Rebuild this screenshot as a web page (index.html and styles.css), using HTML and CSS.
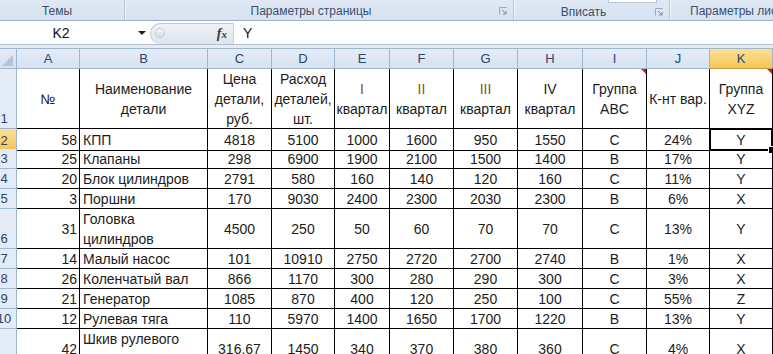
FILE: index.html
```html
<!DOCTYPE html>
<html lang="ru">
<head>
  <meta charset="UTF-8" />
  <title>Анализ ABC/XYZ</title>
  <link rel="stylesheet" href="styles.css">
</head>
<body>
  <div class="ribbon">
    <div class="group g-themes"><span class="group-label">Темы</span></div>
    <div class="group g-page">
      <span class="group-label">Параметры страницы</span>
      <span class="launcher"><svg width="8" height="8" viewBox="0 0 8 8"><path d="M0.5 7.5V0.5H7.5" fill="none" stroke="#9aa9bd"/><path d="M3 3L7 7M7 4V7H4" fill="none" stroke="#7b8ca4"/></svg></span>
    </div>
    <div class="group g-fit">
      <div class="spin-stub"></div>
      <div class="fit-row">
        <span class="group-label">Вписать</span>
        <span class="launcher"><svg width="8" height="8" viewBox="0 0 8 8"><path d="M0.5 7.5V0.5H7.5" fill="none" stroke="#9aa9bd"/><path d="M3 3L7 7M7 4V7H4" fill="none" stroke="#7b8ca4"/></svg></span>
      </div>
    </div>
    <div class="group g-sheet"><span class="group-label">Параметры листа</span></div>
  </div>

  <div class="formula-bar">
    <div class="name-box">
      <span class="name-value">K2</span>
      <span class="name-arrow"></span>
    </div>
    <div class="fx-box">
      <span class="knob"></span>
      <span class="fx">f<i>x</i></span>
    </div>
    <div class="formula-input">Y</div>
  </div>
  <div class="sheet-gap"></div>

  <div class="sheet">
    <div class="row head">
      <div class="corner"><svg width="11" height="11" viewBox="0 0 11 11"><polygon points="11,0 11,11 0,11" fill="#b8c4d3"/></svg></div>
      <div class="ch">A</div><div class="ch">B</div><div class="ch">C</div><div class="ch">D</div>
      <div class="ch">E</div><div class="ch">F</div><div class="ch">G</div><div class="ch">H</div>
      <div class="ch">I</div><div class="ch">J</div><div class="ch active">K</div>
    </div>

    <div class="row r1">
      <div class="rh">1</div>
      <div class="c"><span>№</span></div>
      <div class="c"><span>Наименование детали</span></div>
      <div class="c"><span>Цена детали, руб.</span></div>
      <div class="c"><span>Расход деталей, шт.</span></div>
      <div class="c"><span><span class="rim">I</span> квартал</span></div>
      <div class="c"><span><span class="rim">II</span> квартал</span></div>
      <div class="c"><span><span class="rim">III</span> квартал</span></div>
      <div class="c"><span>IV квартал</span></div>
      <div class="c note"><span>Группа ABC</span></div>
      <div class="c"><span>К-нт вар.</span></div>
      <div class="c note"><span>Группа XYZ</span></div>
    </div>

    <div class="row">
      <div class="rh active">2</div>
      <div class="c num">58</div><div class="c txt">КПП</div><div class="c">4818</div><div class="c">5100</div>
      <div class="c">1000</div><div class="c">1600</div><div class="c">950</div><div class="c">1550</div>
      <div class="c">C</div><div class="c">24%</div><div class="c sel">Y</div>
    </div>
    <div class="row">
      <div class="rh">3</div>
      <div class="c num">25</div><div class="c txt">Клапаны</div><div class="c">298</div><div class="c">6900</div>
      <div class="c">1900</div><div class="c">2100</div><div class="c">1500</div><div class="c">1400</div>
      <div class="c">B</div><div class="c">17%</div><div class="c">Y</div>
    </div>
    <div class="row">
      <div class="rh">4</div>
      <div class="c num">20</div><div class="c txt">Блок цилиндров</div><div class="c">2791</div><div class="c">580</div>
      <div class="c">160</div><div class="c">140</div><div class="c">120</div><div class="c">160</div>
      <div class="c">C</div><div class="c">11%</div><div class="c">Y</div>
    </div>
    <div class="row">
      <div class="rh">5</div>
      <div class="c num">3</div><div class="c txt">Поршни</div><div class="c">170</div><div class="c">9030</div>
      <div class="c">2400</div><div class="c">2300</div><div class="c">2030</div><div class="c">2300</div>
      <div class="c">B</div><div class="c">6%</div><div class="c">X</div>
    </div>
    <div class="row tall">
      <div class="rh">6</div>
      <div class="c num">31</div><div class="c txt">Головка цилиндров</div><div class="c">4500</div><div class="c">250</div>
      <div class="c">50</div><div class="c">60</div><div class="c">70</div><div class="c">70</div>
      <div class="c">C</div><div class="c">13%</div><div class="c">Y</div>
    </div>
    <div class="row">
      <div class="rh">7</div>
      <div class="c num">14</div><div class="c txt">Малый насос</div><div class="c">101</div><div class="c">10910</div>
      <div class="c">2750</div><div class="c">2720</div><div class="c">2700</div><div class="c">2740</div>
      <div class="c">B</div><div class="c">1%</div><div class="c">X</div>
    </div>
    <div class="row">
      <div class="rh">8</div>
      <div class="c num">26</div><div class="c txt">Коленчатый вал</div><div class="c">866</div><div class="c">1170</div>
      <div class="c">300</div><div class="c">280</div><div class="c">290</div><div class="c">300</div>
      <div class="c">C</div><div class="c">3%</div><div class="c">X</div>
    </div>
    <div class="row">
      <div class="rh">9</div>
      <div class="c num">21</div><div class="c txt">Генератор</div><div class="c">1085</div><div class="c">870</div>
      <div class="c">400</div><div class="c">120</div><div class="c">250</div><div class="c">100</div>
      <div class="c">C</div><div class="c">55%</div><div class="c">Z</div>
    </div>
    <div class="row">
      <div class="rh">10</div>
      <div class="c num">12</div><div class="c txt">Рулевая тяга</div><div class="c">110</div><div class="c">5970</div>
      <div class="c">1400</div><div class="c">1650</div><div class="c">1700</div><div class="c">1220</div>
      <div class="c">B</div><div class="c">13%</div><div class="c">Y</div>
    </div>
    <div class="row tall">
      <div class="rh">11</div>
      <div class="c num">42</div><div class="c txt">Шкив рулевого насоса</div><div class="c">316.67</div><div class="c">1450</div>
      <div class="c">340</div><div class="c">370</div><div class="c">380</div><div class="c">360</div>
      <div class="c">C</div><div class="c">4%</div><div class="c">X</div>
    </div>
  </div>
</body>
</html>
```

FILE: styles.css
```css
:root {
  --linha-fita: #b4c5dc;
  --linha-cabecalho: #9eb6ce;
  --texto-cabecalho: #2c4569;
  --celula: #1c1c1c;
  --cols: 25px 63px 128px 64px 63px 55px 64px 64px 65px 64px 63px 63px;
}
* {
  box-sizing: border-box;
}
body {
  margin: 0;
  overflow: hidden;
  background: #fff;
  font-family: 'Liberation Sans', Arial, sans-serif;
}

/* ribbon */
.ribbon {
  display: flex;
  height: 21px;
  background: linear-gradient(#dfe8f4, #d7e3f1);
  border-bottom: 1px solid #9cb0c9;
  font-size: 12px;
  color: #3b4f6e;
}
.group {
  display: flex;
  flex-shrink: 0;
  align-items: center;
  border-right: 1px solid var(--linha-fita);
  box-shadow: 1px 0 0 #eef3fa;
  padding-top: 2px;
}
.group-label {
  flex: 1;
  text-align: center;
}
.g-themes {
  width: 125px;
  padding-right: 10px;
}
.g-page {
  width: 389px;
}
.g-fit {
  width: 156px;
  flex-direction: column;
  align-items: stretch;
  padding-top: 0;
}
.spin-stub {
  height: 3px;
  width: 49px;
  margin-left: 94px;
  background: #fff;
  border: 1px solid #b9c6d6;
  border-top: none;
}
.fit-row {
  flex: 1;
  display: flex;
  align-items: center;
}
.g-sheet {
  flex: 1;
  flex-shrink: 1;
  min-width: 0;
  overflow: hidden;
  border-right: none;
  box-shadow: none;
  padding-left: 20px;
}
.g-sheet .group-label {
  text-align: left;
  white-space: nowrap;
}
.launcher {
  width: 16px;
  display: flex;
  padding-left: 2px;
}

/* formula bar */
.formula-bar {
  display: flex;
  height: 24px;
  background: #fff;
  border-bottom: 1px solid #b3c1d3;
  font-size: 14px;
  color: #111;
}
.name-box {
  width: 150px;
  display: flex;
  align-items: center;
}
.name-value {
  width: 122px;
  text-align: center;
}
.name-arrow {
  margin-left: 16px;
  border-left: 4px solid transparent;
  border-right: 4px solid transparent;
  border-top: 4px solid #222;
}
.fx-box {
  width: 84px;
  margin-top: 2px;
  display: flex;
  align-items: center;
  background: linear-gradient(#eef2f7, #dde4ee);
  border: 1px solid #bcc8d7;
  border-bottom: none;
  border-right: 1px solid #c8d2de;
  border-radius: 11px 0 0 11px;
}
.knob {
  width: 10px;
  height: 10px;
  margin-left: 4px;
  margin-top: -3px;
  border-radius: 50%;
  background: linear-gradient(#f6f8fb, #d3dbe6);
  border: 1px solid #bfcad8;
}
.fx {
  margin-left: auto;
  padding-right: 6px;
  font-family: 'Liberation Serif', serif;
  font-style: italic;
  font-weight: bold;
  font-size: 14px;
  color: #3a3a3a;
}
.fx i {
  font-size: 11px;
}
.formula-input {
  flex: 1;
  display: flex;
  align-items: center;
  padding-left: 9px;
}
.sheet-gap {
  height: 4px;
  background: #e7ecf3;
  border-bottom: 1px solid var(--linha-cabecalho);
}

/* sheet */
.sheet {
  margin-left: -8px;
  font-size: 14px;
  color: var(--celula);
}
.row {
  display: grid;
  grid-template-columns: var(--cols);
  height: 20px;
}
.row.r1 {
  height: 60px;
}
.row.tall {
  height: 40px;
}
.corner, .ch, .rh {
  background: linear-gradient(#e4ecf7, #d6e2f1);
  border-right: 1px solid var(--linha-cabecalho);
  border-bottom: 1px solid var(--linha-cabecalho);
  color: var(--texto-cabecalho);
  font-size: 13px;
}
.corner {
  display: flex;
  justify-content: flex-end;
  align-items: flex-end;
  padding: 0 3px 2px 0;
}
.ch {
  display: flex;
  align-items: center;
  justify-content: center;
}
.ch.active {
  background: linear-gradient(#fbdf96, #f6c658);
  border-bottom-color: #c99b3f;
}
.rh {
  display: flex;
  align-items: flex-end;
  justify-content: center;
  line-height: 16px;
  padding-bottom: 1px;
  background: #e2ebf6;
}
.rh.active {
  background: linear-gradient(#fbdf96, #f6c658);
  border-bottom-color: #c99b3f;
}
.c {
  position: relative;
  display: flex;
  align-items: center;
  justify-content: center;
  text-align: center;
  line-height: 20px;
  padding: 1px 2px 0;
  border-right: 1px solid #000;
  border-bottom: 1px solid #000;
  white-space: nowrap;
  overflow: hidden;
}
.r1 .c {
  white-space: normal;
  padding: 0 1px;
}
.rim {
  color: #8a5414;
}
.c.num {
  justify-content: flex-end;
}
.c.txt {
  justify-content: flex-start;
  text-align: left;
  white-space: normal;
  padding-left: 3px;
}
.c.note::before {
  content: "";
  position: absolute;
  top: 0;
  right: 0;
  border-top: 5px solid #e0161a;
  border-left: 5px solid transparent;
}
.c.sel {
  overflow: visible;
}
.c.sel::before {
  content: "";
  position: absolute;
  top: -1px;
  left: -1px;
  right: -1px;
  bottom: -1px;
  border: 2px solid #000;
}
.c.sel::after {
  content: "";
  position: absolute;
  right: -4px;
  bottom: -4px;
  width: 6px;
  height: 6px;
  background: #000;
  border: 1px solid #fff;
}
```
